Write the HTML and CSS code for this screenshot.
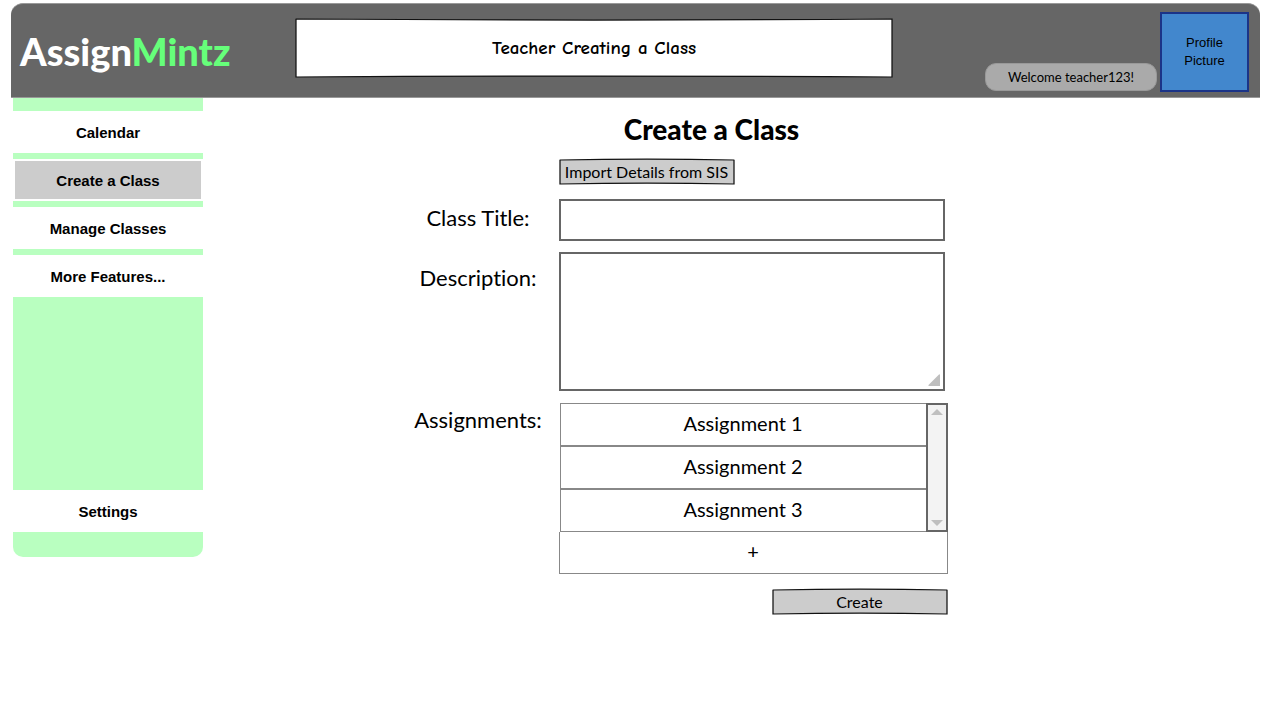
FILE: index.html
```html
<!DOCTYPE html>
<html lang="en">
<head>
<meta charset="utf-8">
<meta name="viewport" content="width=device-width, initial-scale=1">
<title>AssignMintz - Create a Class</title>
<link rel="stylesheet" href="styles.css">
</head>
<body>
<header class="topbar">
  <a class="logo" href="#">Assign<span class="logo-mint">Mintz</span></a>
  <div class="page-title sketch">
    <svg class="sketch-frame" viewBox="0 0 598 60" preserveAspectRatio="none" aria-hidden="true"><path d="M1 1 Q299 3 597 1 L597 59 Q299 57 1 59 Z" fill="#fff"/></svg>
    <span class="sketch-text">Teacher Creating a Class</span>
  </div>
  <div class="account">
    <span class="welcome">Welcome teacher123!</span>
    <button class="profile" type="button">Profile<br>Picture</button>
  </div>
</header>
<div class="layout">
  <nav class="sidebar" aria-label="Main">
    <a class="nav-item" href="#">Calendar</a>
    <a class="nav-item nav-current" href="#" aria-current="page">Create a Class</a>
    <a class="nav-item" href="#">Manage Classes</a>
    <a class="nav-item" href="#">More Features...</a>
    <a class="nav-item nav-settings" href="#">Settings</a>
  </nav>
  <main class="main">
    <form class="class-form">
      <h1 class="heading">Create a Class</h1>
      <button class="button import sketch" type="button">
        <svg class="sketch-frame" viewBox="0 0 176 27" preserveAspectRatio="none" aria-hidden="true"><path d="M1 2 Q88 0 175 2 L175 26 Q88 24 1 26 Z" fill="#ccc"/></svg>
        <span class="sketch-text">Import Details from SIS</span>
      </button>
      <label class="label" for="class-title">Class Title:</label>
      <input class="field" id="class-title" type="text">
      <label class="label" for="description">Description:</label>
      <div class="area">
        <textarea class="field field-tall" id="description"></textarea>
        <svg class="grip" viewBox="0 0 12 12" aria-hidden="true"><path d="M11 0.500 Q12 0 12 1 V12 H1 Q0 12 0.500 11 Z" fill="#bfbfbf"/></svg>
      </div>
      <span class="label" id="assignments-label">Assignments:</span>
      <div class="assignments">
        <div class="list">
          <ul class="rows" aria-labelledby="assignments-label">
            <li class="row">Assignment 1</li>
            <li class="row">Assignment 2</li>
            <li class="row">Assignment 3</li>
          </ul>
          <div class="scroll">
            <button class="arrow" type="button" aria-label="Scroll up"><svg width="12" height="6" viewBox="0 0 12 6"><path d="M0 6 L6 0 L12 6 Z" fill="#bfbfbf"/></svg></button>
            <button class="arrow" type="button" aria-label="Scroll down"><svg width="12" height="6" viewBox="0 0 12 6"><path d="M0 0 L6 6 L12 0 Z" fill="#bfbfbf"/></svg></button>
          </div>
        </div>
        <button class="add" type="button" aria-label="Add assignment">+</button>
      </div>
      <button class="button create sketch" type="submit">
        <svg class="sketch-frame" viewBox="0 0 176 27" preserveAspectRatio="none" aria-hidden="true"><path d="M1 2 Q88 0 175 2 L175 26 Q88 24 1 26 Z" fill="#ccc"/></svg>
        <span class="sketch-text">Create</span>
      </button>
    </form>
  </main>
</div>
</body>
</html>
```
FILE: styles.css
```css
* { box-sizing: border-box; }

body {
  margin: 0;
  padding: 3px 7px 0 11px;
  background: #fff;
  color: #000;
  font-family: Avenir, Lato, sans-serif;
  font-variant-ligatures: none;
}

button, input, textarea { font: inherit; color: inherit; margin: 0; }
button { cursor: pointer; }
a { color: inherit; text-decoration: none; }

.topbar {
  display: grid;
  grid-template-columns: 275px minmax(0, 1fr) auto;
  padding: 8px 11px 5px 9px;
  border: 1px solid #999;
  border-width: 1px 0;
  border-radius: 12px 12px 0 0;
  background: #666;
}

.logo {
  align-self: center;
  margin-bottom: 2px;
  color: #fff;
  font-size: 38px;
  font-weight: 900;
  line-height: 44px;
}
.logo-mint { color: #66ff7a; }

.sketch { position: relative; }
.sketch-frame {
  position: absolute;
  inset: 0;
  width: 100%;
  height: 100%;
}
.sketch-frame path {
  stroke: #111;
  stroke-width: 1.25;
  stroke-linejoin: round;
  vector-effect: non-scaling-stroke;
}
.sketch-text { position: relative; }

.page-title {
  display: flex;
  align-items: center;
  justify-content: center;
  height: 60px;
  margin-top: 6px;
  font-family: "Comic Sans MS", "Comic Neue", "Noto Sans", sans-serif;
  font-size: 19px;
  font-weight: bold;
}

.account {
  display: flex;
  align-items: flex-end;
  gap: 3px;
  padding-left: 92px;
}
.welcome {
  width: 172px;
  margin-bottom: 1px;
  border: 1px solid #999;
  border-radius: 11px;
  background: #aaa;
  font-size: 13px;
  line-height: 26px;
  text-align: center;
}
.profile {
  width: 89px;
  height: 80px;
  padding: 0;
  border: 2px solid #1b3488;
  background: #4287cd;
  font-family: Arial, "Liberation Sans", sans-serif;
  font-size: 13px;
  line-height: 18px;
}

.layout {
  display: flex;
  align-items: flex-start;
}

.sidebar {
  display: flex;
  flex: none;
  flex-direction: column;
  gap: 6px;
  width: 190px;
  min-height: 459px;
  margin-left: 2px;
  padding: 13px 0 25px;
  border-radius: 0 0 10px 10px;
  background: #b9ffc0;
  font-family: Arial, "Liberation Sans", sans-serif;
  font-size: 15px;
  font-weight: bold;
  text-align: center;
}
.nav-item {
  height: 42px;
  border: 2px solid #fff;
  background: #fff;
  line-height: 40px;
}
.nav-current { background: #ccc; }
.nav-settings { margin-top: auto; }

.main {
  flex: 1;
  display: flex;
  justify-content: center;
  padding: 14px 102px 0 0;
}

.class-form {
  display: grid;
  grid-template-columns: 129px 389px;
  column-gap: 16px;
  align-content: start;
  justify-items: start;
}

.heading {
  grid-column: 1 / -1;
  justify-self: stretch;
  margin: 0 0 12px;
  padding-left: 62px;
  font-size: 28px;
  font-weight: 900;
  line-height: 34px;
  text-align: center;
}

.button {
  grid-column: 2;
  width: 176px;
  height: 27px;
  padding: 0;
  border: 0;
  background: none;
  font-size: 16px;
  line-height: 27px;
}
.import { margin-bottom: 14px; }
.create { justify-self: end; margin-top: 14px; }

.label {
  justify-self: center;
  font-size: 22px;
  line-height: 38px;
}

.field {
  display: block;
  width: 386px;
  height: 42px;
  padding: 4px 8px;
  border: 2px solid #666;
  border-radius: 0;
  background: #fff;
  font-size: 18px;
}
.field-tall { height: 139px; resize: none; }
.area {
  position: relative;
  margin: 11px 0 12px;
}
.grip {
  position: absolute;
  right: 5px;
  bottom: 5px;
  width: 12px;
  height: 12px;
}
.area, .assignments { grid-column: 2; }
.label[for="description"] { margin-top: 18px; }
#assignments-label { line-height: 34px; }

.assignments { width: 100%; }
.list { display: flex; padding-left: 1px; }
.rows {
  flex: 1;
  margin: 0;
  padding: 0;
  list-style: none;
}
.row {
  height: 43px;
  border: 1px solid #888;
  border-right: 0;
  font-size: 20px;
  line-height: 39px;
  text-align: center;
}
.scroll {
  display: flex;
  flex-direction: column;
  justify-content: space-between;
  width: 22px;
  border: 2px solid #666;
  background: #f3f3f3;
}
.arrow {
  display: flex;
  justify-content: center;
  padding: 4px 0;
  border: 0;
  background: none;
}
.add {
  display: block;
  width: 100%;
  height: 42px;
  padding: 0 0 4px;
  border: 1px solid #888;
  border-top: 0;
  background: #fff;
  font-size: 20px;
  line-height: 36px;
}
```
